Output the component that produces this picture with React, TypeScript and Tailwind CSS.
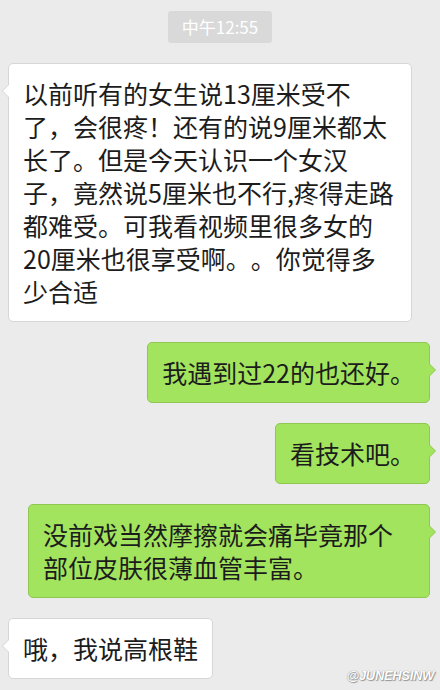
const font = { fontFamily: '"Noto Sans CJK SC", "Noto Sans", sans-serif' }

function Left({ text }: { text: string }) {
  return (
    <div className="flex justify-start pl-2">
      <div className="relative max-w-[404px] rounded-[5px] border border-[#d6d6d6] bg-white px-[14px] py-[13px] text-[25px] leading-[33px] text-[#1c1c1c] [text-spacing-trim:space-all]">
        <span className="absolute left-[-7px] top-[20px] h-0 w-0 border-y-[7px] border-r-[7px] border-y-transparent border-r-[#d6d6d6]" />
        <span className="absolute left-[-6px] top-[20px] h-0 w-0 border-y-[7px] border-r-[7px] border-y-transparent border-r-white" />
        {text}
      </div>
    </div>
  )
}

function Right({ text }: { text: string }) {
  return (
    <div className="flex justify-end pr-[10px]">
      <div className="relative max-w-[402px] rounded-[5px] border border-[#8fc752] bg-[#a2e45e] px-[14px] py-[13px] text-[25px] leading-[33px] text-[#1c1c1c] [text-spacing-trim:space-all]">
        <span className="absolute right-[-7px] top-[20px] h-0 w-0 border-y-[7px] border-l-[7px] border-y-transparent border-l-[#8fc752]" />
        <span className="absolute right-[-6px] top-[20px] h-0 w-0 border-y-[7px] border-l-[7px] border-y-transparent border-l-[#a2e45e]" />
        {text}
      </div>
    </div>
  )
}

export default function App() {
  return (
    <div className="relative h-[690px] w-[440px] overflow-hidden bg-[#ebebeb]" style={font}>
      <div className="flex justify-center pt-[11px]">
        <div className="flex h-[32px] items-center rounded-[3px] bg-[#d9d9d9] px-[14px] text-[17px] text-white">
          中午12:55
        </div>
      </div>
      <div className="mt-[20px] flex flex-col gap-[20px]">
        <Left text="以前听有的女生说13厘米受不了，会很疼！还有的说9厘米都太长了。但是今天认识一个女汉子，竟然说5厘米也不行,疼得走路都难受。可我看视频里很多女的20厘米也很享受啊。。你觉得多少合适" />
        <Right text="我遇到过22的也还好。" />
        <Right text="看技术吧。" />
        <Right text="没前戏当然摩擦就会痛毕竟那个部位皮肤很薄血管丰富。" />
        <Left text="哦，我说高根鞋" />
      </div>
      <div
        className="absolute bottom-[5px] right-[6px] text-[13px] font-bold italic tracking-tight text-white"
        style={{ fontFamily: '"Liberation Sans", sans-serif', textShadow: '0 0 1px #777, 1px 1px 1px #999' }}
      >
        @JUNEHSINW
      </div>
    </div>
  )
}
